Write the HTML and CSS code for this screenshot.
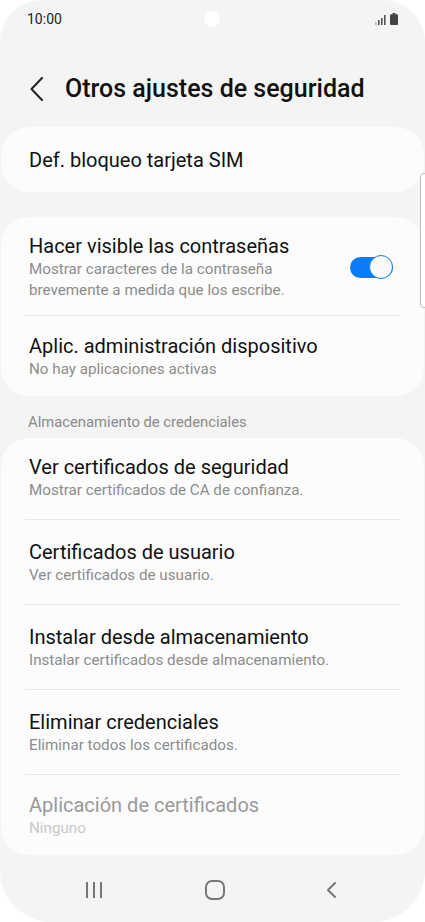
FILE: index.html
```html
<!DOCTYPE html>
<html lang="es">
<head>
  <meta charset="UTF-8" />
  <title>Otros ajustes de seguridad</title>
  <meta name="viewport" content="width=device-width, initial-scale=1" />
  <link rel="stylesheet" href="styles.css">
</head>
<body>
  <div class="phone">

    <!-- status bar -->
    <div class="status">
      <span class="time">10:00</span>
      <span class="camera"></span>
      <span class="status-icons">
        <svg width="12" height="10" viewBox="0 0 12 10">
          <rect x="0" y="7" width="1.6" height="3" fill="#bbb"/>
          <rect x="3" y="5" width="1.6" height="5" fill="#555"/>
          <rect x="6" y="3" width="1.6" height="7" fill="#555"/>
          <rect x="9" y="0" width="1.6" height="10" fill="#555"/>
        </svg>
        <svg width="8" height="12" viewBox="0 0 8 12">
          <rect x="2.5" y="0" width="3" height="1.5" fill="#444"/>
          <rect x="0" y="1.2" width="8" height="10.8" rx="1.2" fill="#444"/>
        </svg>
      </span>
    </div>

    <!-- header -->
    <div class="header">
      <svg class="back" width="16" height="24" viewBox="0 0 16 24">
        <path d="M13 1 L2.5 12 L13 23" fill="none" stroke="#222" stroke-width="2" stroke-linecap="round" stroke-linejoin="round"/>
      </svg>
      <h1>Otros ajustes de seguridad</h1>
    </div>

    <div class="card">
      <div class="row single">
        <div class="title">Def. bloqueo tarjeta SIM</div>
      </div>
    </div>

    <div class="card card-gap">
      <div class="row with-switch">
        <div class="text">
          <div class="title">Hacer visible las contraseñas</div>
          <div class="sub">Mostrar caracteres de la contraseña brevemente a medida que los escribe.</div>
        </div>
        <div class="switch"><span class="knob"></span></div>
      </div>
      <div class="divider"></div>
      <div class="row">
        <div class="title">Aplic. administración dispositivo</div>
        <div class="sub">No hay aplicaciones activas</div>
      </div>
    </div>

    <div class="section">Almacenamiento de credenciales</div>

    <div class="card">
      <div class="row">
        <div class="title">Ver certificados de seguridad</div>
        <div class="sub">Mostrar certificados de CA de confianza.</div>
      </div>
      <div class="divider"></div>
      <div class="row">
        <div class="title">Certificados de usuario</div>
        <div class="sub">Ver certificados de usuario.</div>
      </div>
      <div class="divider"></div>
      <div class="row">
        <div class="title">Instalar desde almacenamiento</div>
        <div class="sub">Instalar certificados desde almacenamiento.</div>
      </div>
      <div class="divider"></div>
      <div class="row">
        <div class="title">Eliminar credenciales</div>
        <div class="sub">Eliminar todos los certificados.</div>
      </div>
      <div class="divider"></div>
      <div class="row disabled">
        <div class="title">Aplicación de certificados</div>
        <div class="sub">Ninguno</div>
      </div>
    </div>

    <!-- navigation bar -->
    <div class="navbar">
      <svg width="20" height="20" viewBox="0 0 20 20">
        <path d="M3 2 V18 M10 2 V18 M17 2 V18" stroke="#777" stroke-width="2"/>
      </svg>
      <svg width="22" height="22" viewBox="0 0 22 22">
        <rect x="2" y="2" width="18" height="18" rx="6" fill="none" stroke="#777" stroke-width="2"/>
      </svg>
      <svg width="14" height="18" viewBox="0 0 14 18">
        <path d="M10 2 L3 9 L10 16" fill="none" stroke="#777" stroke-width="2" stroke-linecap="round" stroke-linejoin="round"/>
      </svg>
    </div>

    <div class="scrollbar"></div>
  </div>
</body>
</html>
```

FILE: styles.css
```css
html, body {
  margin: 0;
  padding: 0;
  background: #fff;
}
body {
  font-family: Roboto, "Noto Sans", sans-serif;
  color: #111;
}
.phone {
  position: relative;
  width: 425px;
  height: 922px;
  background: #f4f4f4;
  border-radius: 42px 42px 52px 52px;
  overflow: hidden;
  display: flex;
  flex-direction: column;
}

/* status bar */
.status {
  height: 40px;
  display: flex;
  align-items: center;
  justify-content: space-between;
  padding: 0 27px 2px 27px;
  box-sizing: border-box;
  position: relative;
}
.time {
  font-size: 14px;
  color: #222;
}
.camera {
  position: absolute;
  left: 204px;
  top: 11px;
  width: 16px;
  height: 16px;
  border-radius: 50%;
  background: #fff;
}
.status-icons {
  display: flex;
  align-items: flex-end;
  gap: 3px;
}

/* header */
.header {
  display: flex;
  align-items: center;
  padding: 35px 0 24px 29px;
  height: 28px;
}
.back {
  margin-right: 20px;
}
h1 {
  margin: 0;
  font-size: 25px;
  font-weight: 500;
  color: #111;
  line-height: 30px;
}

/* cards */
.card {
  background: #fcfcfc;
  border-radius: 28px;
  margin: 0 1px;
}
.card-gap {
  margin-top: 25px;
}
.row {
  padding: 19px 31px 18px 28px;
}
.row:first-child {
  padding-top: 16px;
}
.row:last-child {
  padding-top: 17px;
  padding-bottom: 16px;
}
.row.single {
  padding: 20px 28px 19px;
}
.title {
  font-size: 20px;
  line-height: 26px;
  color: #111;
}
.sub {
  font-size: 15.2px;
  line-height: 21px;
  color: #8c8c8c;
}
.row.disabled .title {
  color: #9a9a9a;
}
.row.disabled .sub {
  color: #c8c8c8;
}
.divider {
  height: 1px;
  background: #e8e8e8;
  margin: 0 23px 0 24px;
}

.with-switch {
  display: flex;
  align-items: center;
  gap: 20px;
  padding-bottom: 14px;
}
.with-switch .text {
  flex: 1;
}
.switch {
  position: relative;
  width: 43px;
  height: 21px;
  background: #0c7bf6;
  border-radius: 11px;
  flex-shrink: 0;
}
.knob {
  position: absolute;
  right: 0;
  top: -2px;
  width: 22px;
  height: 22px;
  border-radius: 50%;
  background: #fafafa;
  border: 1.5px solid #0c7bf6;
}

.section {
  font-size: 14.8px;
  line-height: 20px;
  color: #8a8a8a;
  padding: 16px 28px 6px;
}

/* nav bar */
.navbar {
  margin-top: auto;
  height: 56px;
  display: flex;
  align-items: center;
  justify-content: space-between;
  padding: 0 86px 4px 84px;
}

.scrollbar {
  position: absolute;
  right: -3px;
  top: 173px;
  width: 6px;
  height: 133px;
  border: 1.5px solid #bdbdbd;
  border-radius: 4px;
  background: #fff;
}
```
